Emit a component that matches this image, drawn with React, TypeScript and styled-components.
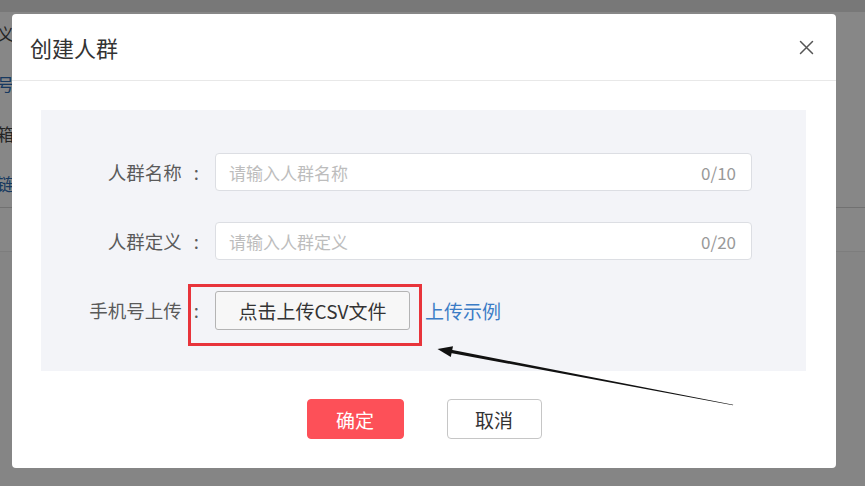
import styled, { createGlobalStyle } from "styled-components";

const GlobalStyle = createGlobalStyle`
  html, body {
    margin: 0;
    padding: 0;
    width: 865px;
    height: 486px;
    overflow: hidden;
    font-family: "Noto Sans CJK SC", "Noto Sans", sans-serif;
  }
`;

const backItems = [
  { text: "人群定义", link: false },
  { text: "账号", link: true },
  { text: "邮箱", link: false },
  { text: "注册链", link: true },
];

const fields = [
  { label: "人群名称", placeholder: "请输入人群名称", max: 10 },
  { label: "人群定义", placeholder: "请输入人群定义", max: 20 },
];

const App = () => {
  return (
    <SPage>
      <GlobalStyle />
      <STopBar />
      <SSection>
        <SSideList>
          {backItems.map((item) => (
            <SSideItem key={item.text} $link={item.link}>
              {item.text}
            </SSideItem>
          ))}
        </SSideList>
      </SSection>
      <SBand />
      <SMask />

      <SModal>
        <SHeader>
          <STitle>创建人群</STitle>
          <SClose aria-label="关闭">
            <svg width="15" height="15" viewBox="0 0 15 15">
              <path
                d="M1.5 1.5 L13.5 13.5 M13.5 1.5 L1.5 13.5"
                stroke="#555"
                strokeWidth="1.5"
                strokeLinecap="round"
              />
            </svg>
          </SClose>
        </SHeader>

        <SBody>
          <SFormBox>
            {fields.map((f) => (
              <SRow key={f.label}>
                <SLabel>
                  {f.label}
                  <SColon>:</SColon>
                </SLabel>
                <SInputWrap>
                  <SInput placeholder={f.placeholder} />
                  <SCount>0/{f.max}</SCount>
                </SInputWrap>
              </SRow>
            ))}
            <SRow>
              <SLabel>
                手机号上传
                <SColon>:</SColon>
              </SLabel>
              <SUploadButton>点击上传CSV文件</SUploadButton>
              <SLink href="#">上传示例</SLink>
            </SRow>
          </SFormBox>
        </SBody>

        <SFooter>
          <SButton $primary>确定</SButton>
          <SButton>取消</SButton>
        </SFooter>
      </SModal>

      <SAnnotation width="865" height="486" viewBox="0 0 865 486">
        <rect
          x="189.5"
          y="285.5"
          width="231"
          height="59"
          fill="none"
          stroke="#e8343b"
          strokeWidth="3"
        />
        <polygon points="451.3,349.8 450.7,353 733,405.3 733.2,404.7" fill="#111" />
        <polygon points="437.5,349 453,346.3 450.8,357" fill="#111" />
      </SAnnotation>
    </SPage>
  );
};

export default App;

const SPage = styled.div`
  position: relative;
  width: 865px;
  height: 486px;
  background: #fbfbfb;
  overflow: hidden;
`;

const STopBar = styled.div`
  height: 12px;
  background: #e2e2e2;
`;

const SSection = styled.div`
  height: 195px;
  background: #ffffff;
  border-bottom: 1px solid #d6d6d6;
`;

const SSideList = styled.div`
  width: 14px;
  display: flex;
  flex-direction: column;
  align-items: flex-end;
  gap: 26px;
  padding-top: 10px;
`;

const SSideItem = styled.span<{ $link?: boolean }>`
  white-space: nowrap;
  font-size: 17px;
  line-height: 24px;
  color: ${(p) => (p.$link ? "#2d6db5" : "#444")};
`;

const SBand = styled.div`
  height: 43px;
  background: #ffffff;
  border-bottom: 1px solid #ededed;
`;

const SMask = styled.div`
  position: absolute;
  inset: 0;
  background: rgba(0, 0, 0, 0.47);
`;

const SModal = styled.div`
  position: absolute;
  left: 12px;
  top: 14px;
  width: 824px;
  background: #ffffff;
  border-radius: 4px;
  display: flex;
  flex-direction: column;
`;

const SHeader = styled.div`
  height: 66px;
  display: flex;
  align-items: center;
  justify-content: space-between;
  padding: 0 22px 0 18px;
  border-bottom: 1px solid #e8e8e8;
`;

const STitle = styled.h2`
  margin: 0;
  font-size: 22px;
  font-weight: 400;
  color: #333;
`;

const SClose = styled.button`
  border: none;
  background: none;
  padding: 0;
  display: flex;
  cursor: pointer;
`;

const SBody = styled.div`
  padding: 29px 30px 0 29px;
`;

const SFormBox = styled.div`
  background: #f3f4f8;
  padding: 43px 54px 42px 0;
  display: flex;
  flex-direction: column;
  gap: 31px;
`;

const SRow = styled.div`
  height: 38px;
  display: flex;
  align-items: center;
`;

const SLabel = styled.label`
  width: 158px;
  margin-right: 16px;
  display: flex;
  justify-content: flex-end;
  align-items: center;
  font-size: 18.5px;
  color: #5a5a5a;
  white-space: nowrap;
`;

const SColon = styled.span`
  margin-left: 12px;
`;

const SInputWrap = styled.div`
  flex: 1;
  height: 38px;
  position: relative;
  display: flex;
  align-items: center;
`;

const SInput = styled.input`
  width: 100%;
  height: 100%;
  box-sizing: border-box;
  border: 1px solid #dcdee3;
  border-radius: 4px;
  background: #ffffff;
  padding: 0 60px 0 13px;
  font-family: inherit;
  font-size: 17px;
  color: #333;
  outline: none;

  &::placeholder {
    color: #bdbdbd;
  }
`;

const SCount = styled.span`
  position: absolute;
  right: 16px;
  font-size: 17px;
  color: #999;
`;

const SUploadButton = styled.button`
  width: 195px;
  height: 39px;
  box-sizing: border-box;
  border: 1px solid #b4b4b4;
  border-radius: 3px;
  background: #f7f7f7;
  font-family: inherit;
  font-size: 19px;
  color: #333;
  cursor: pointer;
`;

const SLink = styled.a`
  margin-left: 15px;
  font-size: 19px;
  color: #3b7cc6;
  text-decoration: none;
`;

const SFooter = styled.div`
  display: flex;
  justify-content: center;
  gap: 43px;
  padding: 28px 0 29px;
`;

const SButton = styled.button<{ $primary?: boolean }>`
  width: ${(p) => (p.$primary ? "97px" : "95px")};
  height: 40px;
  box-sizing: border-box;
  border-radius: 4px;
  border: 1px solid ${(p) => (p.$primary ? "#fd5058" : "#c6c6c6")};
  background: ${(p) => (p.$primary ? "#fd5058" : "#ffffff")};
  color: ${(p) => (p.$primary ? "#ffffff" : "#333")};
  font-family: inherit;
  font-size: 19px;
  cursor: pointer;
`;

const SAnnotation = styled.svg`
  position: absolute;
  left: 0;
  top: 0;
  pointer-events: none;
`;
